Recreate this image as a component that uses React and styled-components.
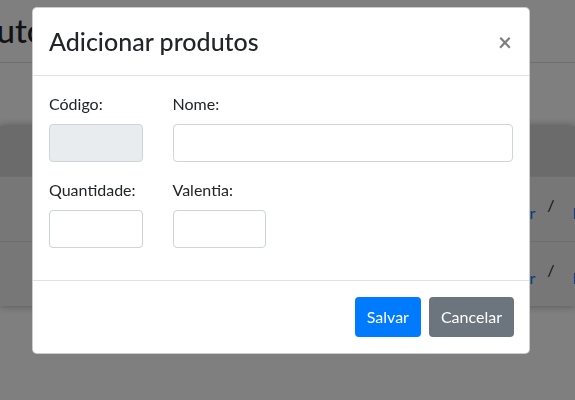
import React from "react";
import styled, { createGlobalStyle } from "styled-components";

const GlobalStyle = createGlobalStyle`
  html, body {
    margin: 0;
    padding: 0;
    width: 575px;
    height: 400px;
    overflow: hidden;
    background: #fff;
  }
  body {
    font-family: Lato, "Open Sans", "Liberation Sans", sans-serif;
    color: #212529;
  }
  * { box-sizing: border-box; }
`;

const Page = styled.div`
  width: 575px;
  height: 400px;
  overflow: hidden;
`;

const PageHeader = styled.div`
  height: 63px;
  padding-top: 11px;
  border-bottom: 1px solid #dedede;
  overflow: hidden;
`;

const PageTitle = styled.h1`
  margin: 0 0 0 -72px;
  font-size: 33px;
  line-height: 38px;
  font-weight: 500;
  color: #212529;
  white-space: nowrap;
`;

const TableCard = styled.div`
  margin-top: 63px;
  box-shadow: 0 0 8px rgba(0, 0, 0, 0.35);
`;

const HeadRow = styled.div`
  height: 50px;
  background: #d6d6d6;
`;

const BodyRow = styled.div`
  height: 65px;
  padding-top: 6px;
  background: #efefef;
  border-top: 1px solid #dcdcdc;
  display: flex;
  align-items: center;
  padding-left: 494px;
  white-space: nowrap;
  font-size: 16px;
`;

const ActionLink = styled.a`
  color: #007bff;
  text-decoration: none;
`;

const Slash = styled.span`
  margin: 0 18px 0 12px;
  position: relative;
  top: -8px;
`;

const Backdrop = styled.div`
  position: fixed;
  inset: 0;
  background: rgba(0, 0, 0, 0.5);
`;

const Dialog = styled.div`
  width: 498px;
  margin: 7px 0 0 32px;
  background: #fff;
  border: 1px solid rgba(0, 0, 0, 0.2);
  border-radius: 5px;
`;

const Header = styled.div`
  display: flex;
  align-items: center;
  justify-content: space-between;
  padding: 16px;
  border-bottom: 1px solid #dee2e6;
`;

const Title = styled.h4`
  margin: 0;
  font-size: 25px;
  line-height: 35px;
  font-weight: 500;
`;

const Close = styled.button`
  border: 0;
  background: transparent;
  padding: 0;
  margin-right: 1px;
  font-family: inherit;
  font-size: 24px;
  line-height: 1;
  font-weight: 700;
  color: #000;
  opacity: 0.5;
  cursor: pointer;
`;

const Body = styled.div`
  padding: 16px;
  display: grid;
  grid-template-columns: repeat(4, 1fr);
  column-gap: 30px;
`;

const Field = styled.div`
  grid-column: span ${(p) => p.$span || 1};
  margin-bottom: 16px;
`;

const Label = styled.label`
  display: block;
  margin-bottom: 8px;
  font-size: 16px;
  line-height: 24px;
`;

const Input = styled.input`
  display: block;
  width: 100%;
  height: 38px;
  padding: 6px 12px;
  font-size: 16px;
  font-family: inherit;
  border: 1px solid #ced4da;
  border-radius: 4px;
  background: ${(p) => (p.disabled ? "#e9ecef" : "#fff")};
  color: #495057;
`;

const Footer = styled.div`
  display: flex;
  justify-content: flex-end;
  gap: 8px;
  padding: 16px 15px 16px;
  border-top: 1px solid #dee2e6;
`;

const Button = styled.button`
  border: 0;
  border-radius: 4px;
  padding: 8px 12px;
  font-family: inherit;
  font-size: 16px;
  line-height: 24px;
  color: #fff;
  background: ${(p) => (p.$variant === "secondary" ? "#6c757d" : "#007bff")};
  cursor: pointer;
`;

const rows = [1, 2];

export default function App() {
  return (
    <>
      <GlobalStyle />
      <Page>
        <PageHeader>
          <PageTitle>Produtos</PageTitle>
        </PageHeader>
        <TableCard>
          <HeadRow />
          {rows.map((r) => (
            <BodyRow key={r}>
              <ActionLink href="#">Editar</ActionLink>
              <Slash>/</Slash>
              <ActionLink href="#">Excluir</ActionLink>
            </BodyRow>
          ))}
        </TableCard>
      </Page>
      <Backdrop>
        <Dialog>
          <Header>
            <Title>Adicionar produtos</Title>
            <Close aria-label="Fechar">×</Close>
          </Header>
          <Body>
            <Field>
              <Label>Código:</Label>
              <Input disabled />
            </Field>
            <Field $span={3}>
              <Label>Nome:</Label>
              <Input />
            </Field>
            <Field>
              <Label>Quantidade:</Label>
              <Input />
            </Field>
            <Field>
              <Label>Valentia:</Label>
              <Input />
            </Field>
          </Body>
          <Footer>
            <Button>Salvar</Button>
            <Button $variant="secondary">Cancelar</Button>
          </Footer>
        </Dialog>
      </Backdrop>
    </>
  );
}
